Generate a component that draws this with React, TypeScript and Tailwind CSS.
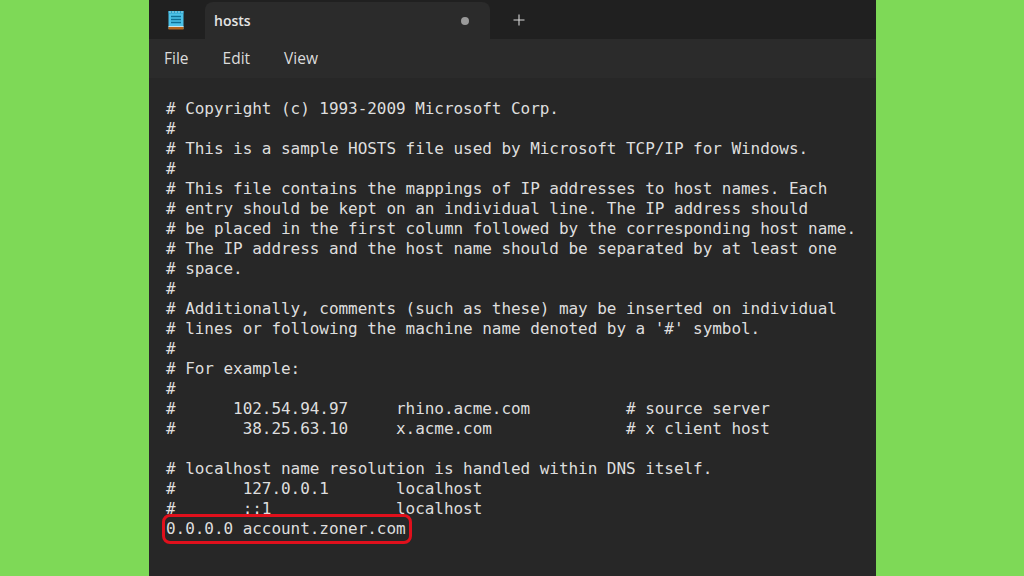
const lines = [
  '# Copyright (c) 1993-2009 Microsoft Corp.',
  '#',
  '# This is a sample HOSTS file used by Microsoft TCP/IP for Windows.',
  '#',
  '# This file contains the mappings of IP addresses to host names. Each',
  '# entry should be kept on an individual line. The IP address should',
  '# be placed in the first column followed by the corresponding host name.',
  '# The IP address and the host name should be separated by at least one',
  '# space.',
  '#',
  '# Additionally, comments (such as these) may be inserted on individual',
  "# lines or following the machine name denoted by a '#' symbol.",
  '#',
  '# For example:',
  '#',
  '#      102.54.94.97     rhino.acme.com          # source server',
  '#       38.25.63.10     x.acme.com              # x client host',
  '',
  '# localhost name resolution is handled within DNS itself.',
  '#       127.0.0.1       localhost',
  '#       ::1             localhost',
  '0.0.0.0 account.zoner.com',
];

const NotepadIcon = () => (
  <svg width="16" height="20" viewBox="0 0 16 20" className="shrink-0">
    <rect x="0.5" y="1" width="15" height="18" fill="#4cc2e8" />
    <rect x="0.5" y="16" width="15" height="1" fill="#c8e6f0" />
    <rect x="0.5" y="17" width="15" height="2.5" fill="#b5651d" />
    <rect x="0.5" y="1" width="15" height="2.5" fill="#2a9fc8" />
    <path d="M2 1v2M5 1v2M8 1v2M11 1v2M14 1v2" stroke="#a8e0f2" strokeWidth="1" />
    <path d="M3 6.5h10M3 9.5h10M3 12.5h10" stroke="#0f6f94" strokeWidth="1.4" />
  </svg>
);

export default function App() {
  return (
    <div className="h-[576px] w-[1024px] overflow-hidden bg-[#7ed957] flex">
      <div className="ml-[149px] w-[727px] h-full flex flex-col bg-[#272727]">
        {/* Title bar */}
        <div className="h-[39px] bg-[#202020] flex items-end shrink-0">
          <div className="w-[56px] h-full flex items-center justify-center pr-[3px]">
            <NotepadIcon />
          </div>
          <div className="w-[285px] h-[37px] bg-[#2b2b2b] rounded-t-lg flex items-center pl-[9px] pr-[21px] justify-between">
            <span className="text-[14px] font-semibold text-[#e4e4e4] font-['Open_Sans',sans-serif]">hosts</span>
            <span className="w-2 h-2 rounded-full bg-[#9a9a9a]" />
          </div>
          <div className="w-[58px] h-full flex items-center justify-center">
            <svg width="12" height="12" viewBox="0 0 12 12">
              <path d="M6 0.5v11M0.5 6h11" stroke="#d8d8d8" strokeWidth="1.1" />
            </svg>
          </div>
        </div>
        {/* Menu bar */}
        <div className="h-[39px] bg-[#2b2b2b] flex items-center gap-[34px] pl-[15px] text-[15.5px] text-[#dcdcdc] font-['Open_Sans',sans-serif] shrink-0">
          <span>File</span>
          <span>Edit</span>
          <span>View</span>
        </div>
        {/* Editor */}
        <div className="relative flex-1 pl-[17px] pt-[21px] font-['DejaVu_Sans_Mono',monospace] text-[16px] tracking-[-0.05px] leading-[20px] text-[#dedede]">
          {lines.map((line, i) => (
            <div key={i} className="h-5 whitespace-pre">{line}</div>
          ))}
          <div className="absolute left-[13px] top-[436px] w-[250px] h-[30px] border-[3px] border-[#e0101c] rounded-lg" />
        </div>
      </div>
    </div>
  );
}
